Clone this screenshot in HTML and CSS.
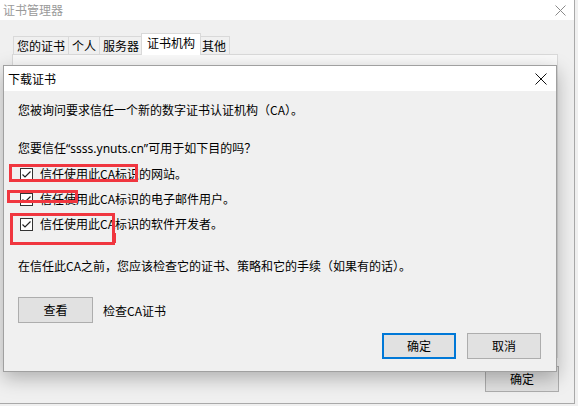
FILE: index.html
```html
<!DOCTYPE html>
<html lang="zh-CN">
<head>
<meta charset="utf-8">
<title>证书管理器</title>
<link rel="stylesheet" href="styles.css">
</head>
<body>
<div class="window">
  <div class="win-title">
    <span class="win-title-text">证书管理器</span>
    <svg class="win-close" width="11" height="11" viewBox="0 0 11 11"><path d="M0.5 0.5 L10.5 10.5 M10.5 0.5 L0.5 10.5" stroke="#8a8a8a" stroke-width="1" fill="none"/></svg>
  </div>
  <div class="tabs">
    <div class="tab">您的证书</div>
    <div class="tab">个人</div>
    <div class="tab">服务器</div>
    <div class="tab active">证书机构</div>
    <div class="tab">其他</div>
  </div>
  <div class="panel"></div>
  <div class="win-footer">
    <button class="btn">确定</button>
  </div>
</div>

<div class="dialog">
  <div class="dlg-title">
    <span>下载证书</span>
    <svg class="dlg-close" width="12" height="12" viewBox="0 0 12 12"><path d="M0.5 0.5 L11.5 11.5 M11.5 0.5 L0.5 11.5" stroke="#111" stroke-width="1" fill="none"/></svg>
  </div>
  <div class="dlg-body">
    <p class="line">您被询问要求信任一个新的数字证书认证机构（CA）。</p>
    <p class="line q">您要信任<span class="latin">“ssss.ynuts.cn”</span>可用于如下目的吗？</p>
    <div class="checks">
      <div class="check">
        <svg class="cb" width="13" height="13" viewBox="0 0 13 13"><rect x="0.5" y="0.5" width="12" height="12" fill="#fff" stroke="#333"/><path d="M2.5 6.5 L5 9 L10.5 3.5" stroke="#222" stroke-width="1.2" fill="none"/></svg>
        <span>信任使用此CA标识的网站。</span>
      </div>
      <div class="check">
        <svg class="cb" width="13" height="13" viewBox="0 0 13 13"><rect x="0.5" y="0.5" width="12" height="12" fill="#fff" stroke="#333"/><path d="M2.5 6.5 L5 9 L10.5 3.5" stroke="#222" stroke-width="1.2" fill="none"/></svg>
        <span>信任使用此CA标识的电子邮件用户。</span>
      </div>
      <div class="check">
        <svg class="cb" width="13" height="13" viewBox="0 0 13 13"><rect x="0.5" y="0.5" width="12" height="12" fill="#fff" stroke="#333"/><path d="M2.5 6.5 L5 9 L10.5 3.5" stroke="#222" stroke-width="1.2" fill="none"/></svg>
        <span>信任使用此CA标识的软件开发者。</span>
      </div>
    </div>
    <p class="line note">在信任此CA之前，您应该检查它的证书、策略和它的手续（如果有的话）。</p>
    <div class="view-row">
      <button class="btn view">查看</button>
      <span>检查CA证书</span>
    </div>
    <div class="actions">
      <button class="btn default">确定</button>
      <button class="btn">取消</button>
    </div>
  </div>
</div>

<div class="mark m1"></div>
<div class="mark m2"></div>
<div class="mark m3"></div>
<div class="mark m3b"></div>
</body>
</html>
```
FILE: styles.css
```css
* { box-sizing: border-box; }

body {
  margin: 0;
  width: 578px;
  height: 406px;
  background: #f0f0f0;
  font-family: "Noto Sans CJK SC", "Microsoft YaHei", sans-serif;
  font-size: 12px;
  color: #000;
  position: relative;
  overflow: hidden;
}

.latin { font-family: "Noto Sans", "Noto Sans CJK SC", sans-serif; }

.window {
  width: 575px;
  height: 404px;
  border-right: 1px solid #a9a9a9;
  border-bottom: 1px solid #a9a9a9;
  background: #f0f0f0;
  display: flex;
  flex-direction: column;
}

.win-title {
  height: 20px;
  flex: none;
  background: #fff;
  display: flex;
  align-items: center;
  justify-content: space-between;
  padding: 0 8px 0 3px;
  color: #9a9a9a;
  line-height: 16px;
}

.tabs {
  height: 35px;
  flex: none;
  display: flex;
  align-items: flex-end;
  padding-left: 13px;
}

.tab {
  height: 19px;
  line-height: 17px;
  padding: 0 3px;
  border: 1px solid #d9d9d9;
  border-bottom: none;
  background: #f0f0f0;
  white-space: nowrap;
}

.tab + .tab { margin-left: -1px; }

.tab.active {
  height: 22px;
  line-height: 18px;
  background: #fff;
  margin: 0 -2px 0 -2px;
  padding: 0 5px;
  position: relative;
  z-index: 1;
}

.panel {
  height: 304px;
  flex: none;
  margin: -1px 16px 0 12px;
  border: 1px solid #d9d9d9;
  background: #f9f9f9;
}

.win-footer {
  display: flex;
  justify-content: flex-end;
  padding: 8px 15px 0 0;
}

.btn {
  width: 74px;
  height: 26px;
  padding: 0;
  background: #e1e1e1;
  border: 1px solid #adadad;
  font-family: inherit;
  font-size: 12px;
  color: #000;
  line-height: 16px;
}

.btn.default { border: 2px solid #0078d7; }
.btn.view { width: 75px; }

.dialog {
  position: absolute;
  left: 3px;
  top: 65px;
  width: 554px;
  height: 307px;
  border: 1px solid #a0a0a0;
  background: #f0f0f0;
  box-shadow: 0 6px 18px rgba(0, 0, 0, 0.28);
  display: flex;
  flex-direction: column;
}

.dlg-title {
  height: 25px;
  flex: none;
  background: #fff;
  display: flex;
  align-items: center;
  justify-content: space-between;
  padding: 0 9px 0 4px;
  line-height: 16px;
}

.dlg-body {
  padding: 11px 15px 0 14px;
}

.line {
  margin: 0;
  line-height: 16px;
  white-space: nowrap;
}

.line.q { margin-top: 22px; }

.checks {
  margin-top: 9px;
  display: flex;
  flex-direction: column;
  gap: 9px;
}

.check {
  height: 16px;
  line-height: 16px;
  display: flex;
  align-items: center;
  padding-left: 2px;
}

.cb { margin-right: 7px; flex: none; }

.line.note { margin-top: 26px; }

.view-row {
  margin-top: 23px;
  display: flex;
  align-items: center;
  gap: 10px;
}

.actions {
  margin-top: 10px;
  display: flex;
  justify-content: flex-end;
  gap: 11px;
}

.mark {
  position: absolute;
  border: 3px solid #f0363f;
  z-index: 5;
}

.m1 { left: 9px; top: 164px; width: 129px; height: 18px; }
.m2 { left: 7px; top: 190px; width: 71px; height: 13px; }
.m3 { left: 10px; top: 213px; width: 105px; height: 32px; }
.m3b { left: 114px; top: 233px; width: 2px; height: 10px; border: none; background: #f0363f; }
```
